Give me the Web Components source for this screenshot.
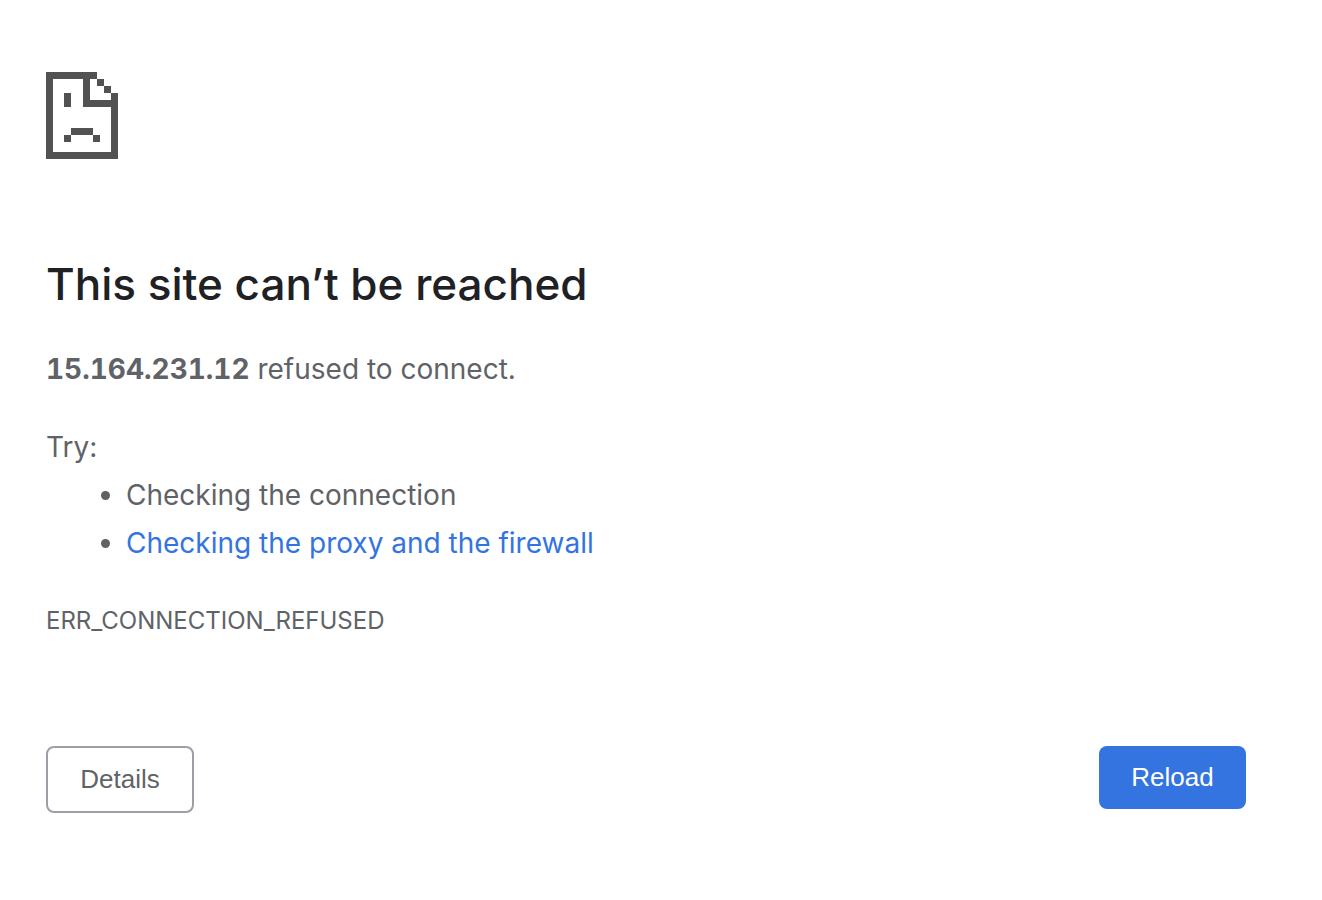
<!DOCTYPE html>
<html lang="en">
<head>
<meta charset="utf-8">
<meta name="viewport" content="width=device-width, initial-scale=1">
<title>This site can’t be reached</title>
<style>
body { margin: 0; background: #fff; color: #5f6368; font: 28px/48px Inter, "Liberation Sans", sans-serif; }
</style>
</head>
<body>
<error-page>
  <sad-page-icon slot="icon"></sad-page-icon>
  <error-message slot="message" code="ERR_CONNECTION_REFUSED">
    <span slot="title">This site can’t be reached</span>
    <strong slot="host">15.164.231.12</strong>
  </error-message>
  <action-button slot="actions" variant="outline">Details</action-button>
  <action-button slot="actions" variant="primary">Reload</action-button>
</error-page>
<script>
class ShadowElement extends HTMLElement {
  constructor() {
    super();
    this.attachShadow({ mode: 'open' }).innerHTML = this.constructor.markup;
  }
}

customElements.define('error-page', class extends ShadowElement {
  static markup = `
    <style>
      :host { display: block; padding: 72px 76px 72px 46px; }
      .actions { display: flex; flex-wrap: wrap; justify-content: space-between; align-items: flex-start; gap: 16px; margin-top: 101px; }
    </style>
    <main>
      <slot name="icon"></slot>
      <slot name="message"></slot>
      <div class="actions"><slot name="actions"></slot></div>
    </main>`;
});

customElements.define('sad-page-icon', class extends ShadowElement {
  static markup = `
    <style>
      :host { display: block; margin-bottom: 95px; }
      svg { display: block; }
    </style>
    <svg width="72" height="87" viewBox="0 0 72 87" fill="#525252" shape-rendering="crispEdges" aria-hidden="true">
      <path d="M0 0H51V7H44V28H65V21H72V87H0ZM7 7V80H65V35H37V7Z" fill-rule="evenodd"/>
      <path d="M51 7h7v7h-7zM58 14h7v7h-7zM18 21h7v14h-7zM25 56h22v7H25zM18 63h7v7h-7zM47 63h7v7h-7z"/>
    </svg>`;
});

customElements.define('error-message', class extends ShadowElement {
  static markup = `
    <style>
      :host { display: block; }
      h1 { margin: 0 0 31px; color: #202124; font-size: 44px; line-height: 60px; font-weight: 500; }
      p { margin: 0 0 30px; }
      .try { margin: 0; }
      ul { margin: 0 0 30px; padding-left: 80px; }
      a { color: #3474e0; text-decoration: none; }
      .code { margin: 0; font-size: 24px; }
      ::slotted(strong) { font-weight: 700; font-variant-numeric: tabular-nums; }
    </style>
    <h1><slot name="title"></slot></h1>
    <p><slot name="host"></slot> refused to connect.</p>
    <p class="try">Try:</p>
    <ul>
      <li>Checking the connection</li>
      <li><a href="#proxy">Checking the proxy and the firewall</a></li>
    </ul>
    <p class="code"></p>`;
  connectedCallback() {
    this.shadowRoot.querySelector('.code').textContent = this.getAttribute('code');
  }
});

customElements.define('action-button', class extends ShadowElement {
  static markup = `
    <style>
      :host { display: block; }
      button {
        display: block; min-width: 147px; margin: 0; padding: 16px 32px; border: 0; border-radius: 8px;
        background: #3474e0; color: #fff; cursor: pointer;
        font: 26px/31px "Liberation Sans", Arial, sans-serif;
      }
      :host([variant="outline"]) button { min-width: 148px; border: 2px solid #9aa0a6; background: #fff; color: #5f6368; }
    </style>
    <button type="button"><slot></slot></button>`;
});
</script>
</body>
</html>
